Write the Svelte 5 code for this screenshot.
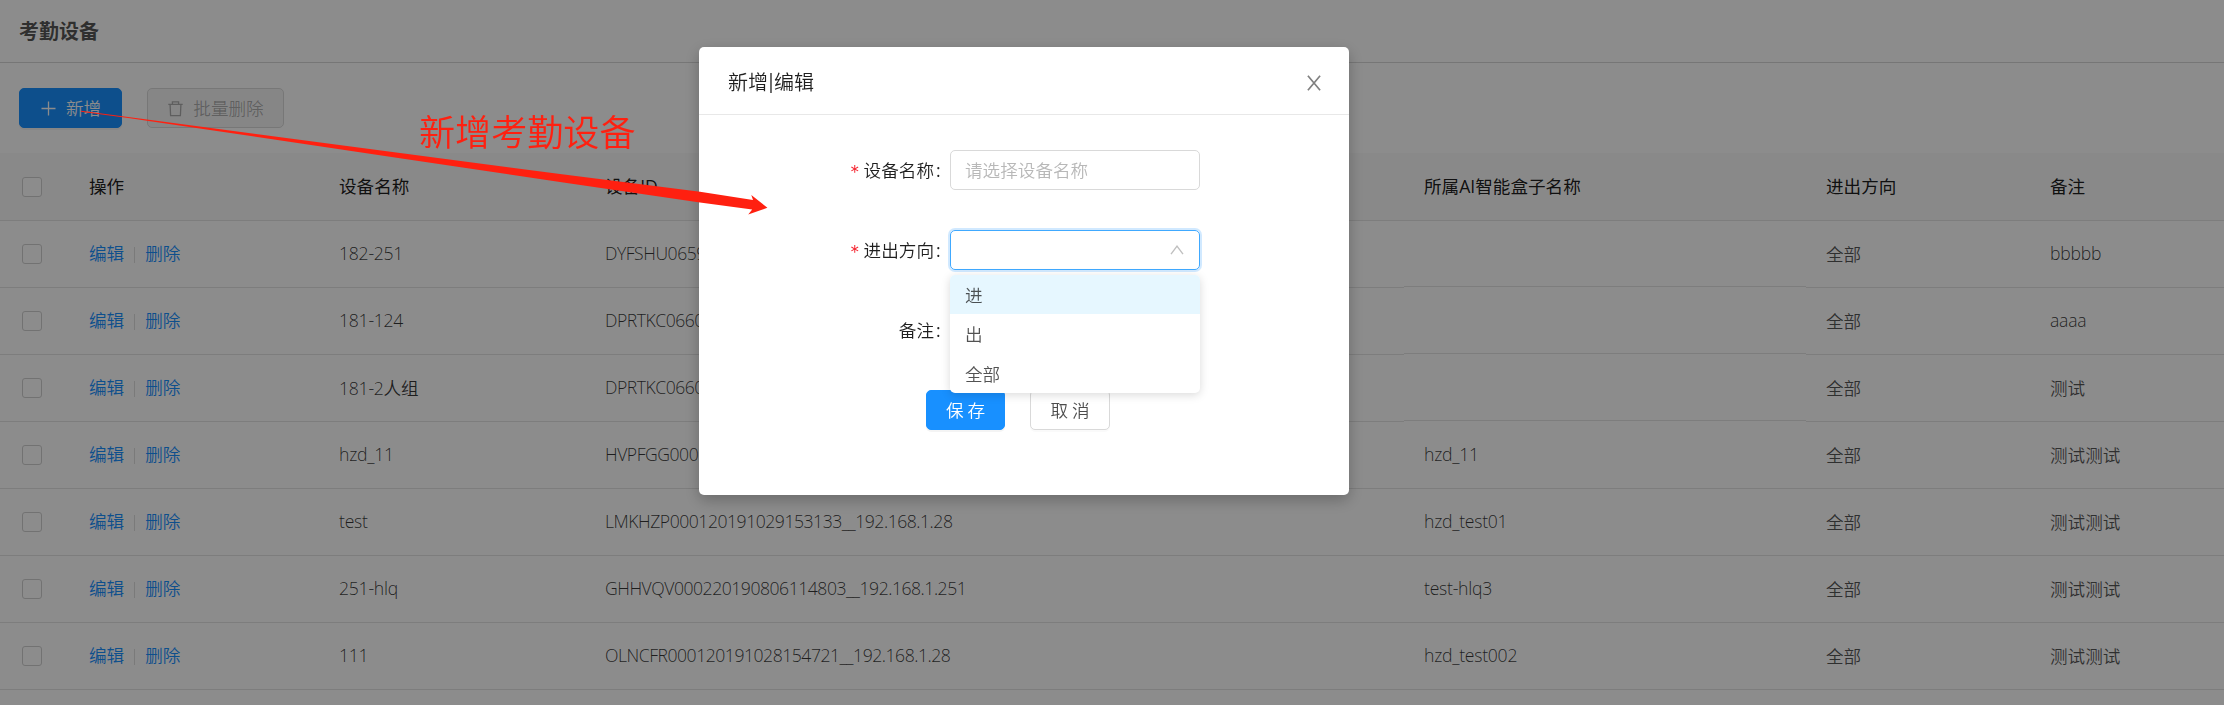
<script>
  const columns = ['操作', '设备名称', '设备ID', '所属AI智能盒子名称', '进出方向', '备注'];
  const rows = [
    ['182-251', 'DYFSHU0659', '', '全部', 'bbbbb'],
    ['181-124', 'DPRTKC0660', '', '全部', 'aaaa'],
    ['181-2人组', 'DPRTKC0660', '', '全部', '测试'],
    ['hzd_11', 'HVPFGG0001', 'hzd_11', '全部', '测试测试'],
    ['test', 'LMKHZP000120191029153133__192.168.1.28', 'hzd_test01', '全部', '测试测试'],
    ['251-hlq', 'GHHVQV000220190806114803__192.168.1.251', 'test-hlq3', '全部', '测试测试'],
    ['111', 'OLNCFR000120191028154721__192.168.1.28', 'hzd_test002', '全部', '测试测试']
  ];
  const options = ['进', '出', '全部'];
</script>

<main class="page">
  <header class="title">考勤设备</header>
  <div class="toolbar">
    <button class="btn primary add">
      <svg width="17" height="17" viewBox="0 0 17 17"><path d="M8.5 1.5v14M1.5 8.5h14" stroke="currentColor" stroke-width="1.3" fill="none" /></svg>
      <span>新增</span>
    </button>
    <button class="btn disabled">
      <svg width="17" height="17" viewBox="0 0 17 17"><path d="M1.3 4.3h14.4M5.4 4V1.8h6.2V4M3.1 4.6l.5 11h9.8l.5-11" stroke="currentColor" stroke-width="1.3" fill="none" /></svg>
      <span>批量删除</span>
    </button>
  </div>
  <div class="table">
    <div class="row head">
      <div class="cell"><i class="check"></i></div>
      {#each columns as c}<div class="cell"><span>{c}</span></div>{/each}
    </div>
    {#each rows as r}
      <div class="row">
        <div class="cell"><i class="check"></i></div>
        <div class="cell links"><a>编辑</a><i class="divider"></i><a>删除</a></div>
        {#each r as v, i}
          <div class="cell" class:raised={v === ''}><span class:latin={/^[\w.-]+/.test(v)} class:id={i === 1}>{v}</span></div>
        {/each}
      </div>
    {/each}
  </div>
</main>

<div class="mask">
  <section class="modal">
    <div class="modal-head">
      <span class="heading"><span>新增</span><span class="bar">|</span><span>编辑</span></span>
      <svg width="16" height="16" viewBox="0 0 16 16"><path d="M1.9 .8 14.1 15.2M14.1 .8 1.9 15.2" stroke="#808080" stroke-width="1.7" fill="none" /></svg>
    </div>
    <div class="form">
      <div class="field">
        <label><b>*</b>设备名称<em>:</em></label>
        <div class="input">请选择设备名称</div>
      </div>
      <div class="field">
        <label><b>*</b>进出方向<em>:</em></label>
        <div class="input focus">
          <svg width="14" height="12" viewBox="0 0 14 12"><path d="M1 10.2 7 2.2l6 8" stroke="#bfbfbf" stroke-width="1.4" fill="none" /></svg>
          <div class="menu">
            {#each options as o, i}<div class="option" class:active={i === 0}>{o}</div>{/each}
          </div>
        </div>
      </div>
      <div class="field">
        <label>备注<em>:</em></label>
        <div class="input"></div>
      </div>
    </div>
    <div class="actions">
      <button class="btn primary">保存</button>
      <button class="btn">取消</button>
    </div>
  </section>
</div>

<div class="note">新增考勤设备</div>
<svg class="arrow" width="2224" height="705" viewBox="0 0 2224 705">
  <path d="M81 110.8 130 117.2 400 153 560 174 700 191.8 753 200 751.3 195 767.4 207.7 748.2 214.6 752.2 209.5 700 202.4 560 182 400 158.2 130 118.2 81 111.8Z" fill="#ff2010" />
</svg>

<style>
  :global(body) { overflow: hidden; }
  .page, .mask, .note {
    font-family: 'Open Sans', 'Noto Sans CJK SC', sans-serif;
    font-size: 17.6px;
    font-weight: 350;
    box-sizing: border-box;
  }
  .page { height: 705px; overflow: hidden; background: #fff; color: rgba(0, 0, 0, .68); }
  .title {
    height: 62px;
    padding-left: 19px;
    border-bottom: 1px solid #d8d8d8;
    font: 700 20px/61px 'Noto Sans CJK SC', sans-serif;
    color: rgba(0, 0, 0, .68);
  }
  .toolbar { display: flex; gap: 25px; padding: 25px 19px; height: 90px; box-sizing: border-box; }
  .btn {
    display: flex;
    align-items: center;
    justify-content: center;
    box-sizing: border-box;
    height: 40px;
    padding: 0;
    border: 1px solid #d9d9d9;
    border-radius: 5px;
    background: #fff;
    box-shadow: 0 2px 0 rgba(0, 0, 0, .02);
    color: rgba(0, 0, 0, .7);
    font: inherit;
    white-space: nowrap;
  }
  .btn svg { margin-right: 9px; flex: none; }
  .toolbar .btn { width: 137px; padding-bottom: 1px; }
  .toolbar .btn svg { margin-top: 1px; }
  .toolbar .add { width: 103px; }
  .btn.primary { background: #1890ff; border-color: #1890ff; color: #fff; box-shadow: 0 2px 0 rgba(0, 0, 0, .045); }
  .btn.disabled { background: #f5f5f5; color: rgba(0, 0, 0, .3); box-shadow: none; }
  .row { display: grid; grid-template-columns: 69px 250px 266px 819px 402px 224px 1fr; height: 67px; }
  .head { height: 68px; background: #fafafa; color: rgba(0, 0, 0, .9); font-weight: 400; }
  .cell { display: flex; align-items: center; padding: 0 0 2px 20px; border-bottom: 1px solid #e4e4e4; white-space: nowrap; }
  .cell:first-child { padding: 0 0 0 22px; }
  .links { padding-bottom: 3px; }
  .raised { margin-bottom: 1px; }
  .check { width: 18px; height: 18px; border: 1px solid #d0d0d0; border-radius: 3px; background: #fff; }
  a { color: #1890ff; }
  .divider { width: 1px; height: 16px; margin: 5px 10px 0; background: #dedede; }
  .latin { letter-spacing: -.25px; color: rgba(0, 0, 0, .78); }
  .id { letter-spacing: -.48px; }
  .mask { position: fixed; inset: 0; background: rgba(0, 0, 0, .45); padding-top: 47px; }
  .modal {
    width: 650px;
    height: 448px;
    margin-left: 699px;
    background: #fff;
    border-radius: 5px;
    box-shadow: 0 5px 15px rgba(0, 0, 0, .25);
    color: rgba(0, 0, 0, .88);
  }
  .modal-head {
    display: flex;
    align-items: center;
    justify-content: space-between;
    height: 64px;
    padding: 3px 27px 0 29px;
    border-bottom: 1px solid #e8e8e8;
    font-size: 20px;
  }
  .modal-head svg { margin-top: 1px; }
  .heading { display: flex; padding-bottom: 2px; }
  .bar { width: 6px; display: flex; justify-content: center; font-weight: 500; }
  .form { display: flex; flex-direction: column; gap: 40px; padding: 35px 0 0; }
  .field { display: flex; align-items: center; height: 40px; }
  label { width: 243px; display: flex; justify-content: flex-end; align-items: center; padding-bottom: 1px; }
  em { font-style: normal; font-weight: 500; width: 8px; padding-left: 2px; box-sizing: border-box; }
  b { color: #f5222d; font: 300 19px/20px Inter, sans-serif; margin-right: 4px; padding-top: 7px; }
  .input {
    position: relative;
    box-sizing: border-box;
    width: 250px;
    height: 40px;
    margin-left: 8px;
    padding-left: 14px;
    border: 1px solid #d9d9d9;
    border-radius: 5px;
    line-height: 38px;
    color: #b8b8b8;
  }
  .focus { display: flex; align-items: center; justify-content: flex-end; padding-right: 15px; border-color: #40a9ff; box-shadow: 0 0 0 2px rgba(24, 144, 255, .2); }
  .menu {
    position: absolute;
    z-index: 2;
    top: 44px;
    left: -1px;
    width: 250px;
    height: 118px;
    overflow: hidden;
    border-radius: 5px;
    background: #fff;
    box-shadow: 0 2px 10px rgba(0, 0, 0, .15);
    color: rgba(0, 0, 0, .68);
  }
  .option { height: 39.4px; line-height: 41px; padding-left: 15px; }
  .active { background: #e6f7ff; }
  .field:last-child .input { visibility: hidden; }
  .actions { display: flex; gap: 25px; padding: 40px 0 0 227px; }
  .actions .btn { width: 80px; padding: 0 0 2px 4px; letter-spacing: 4px; }
  .actions .primary { width: 79px; }
  .note { position: absolute; left: 419px; top: 105px; font-size: 36.1px; line-height: 54px; color: #ff2010; white-space: nowrap; }
  .arrow { position: absolute; left: 0; top: 0; pointer-events: none; }
</style>
